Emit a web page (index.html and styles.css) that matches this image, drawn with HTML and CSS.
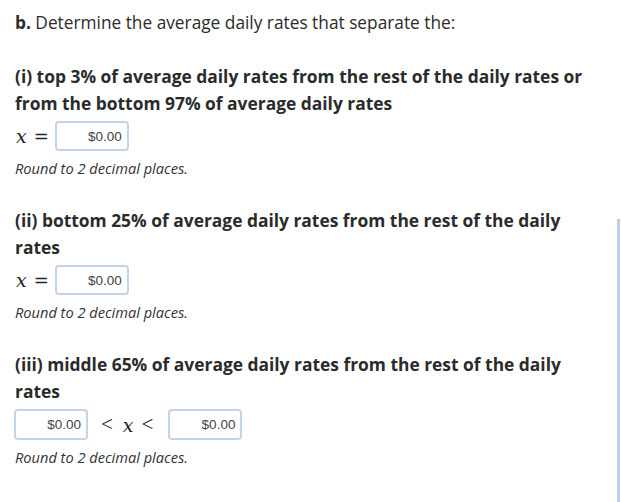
FILE: index.html
```html
<!DOCTYPE html>
<html>
<head>
<meta charset="utf-8">
<link rel="stylesheet" href="styles.css">
</head>
<body>
<div class="page">
  <main class="content">
    <p class="lead"><b>b.</b> Determine the average daily rates that separate the:</p>

    <section class="part">
      <h3 class="part-title">(i) top 3% of average daily rates from the rest of the daily rates or from the bottom 97% of average daily rates</h3>
      <div class="answer">
        <span class="math"><i class="var">x</i><span class="eq">=</span></span>
        <span class="box">$0.00</span>
      </div>
      <p class="hint">Round to 2 decimal places.</p>
    </section>

    <section class="part">
      <h3 class="part-title">(ii) bottom 25% of average daily rates from the rest of the daily rates</h3>
      <div class="answer">
        <span class="math"><i class="var">x</i><span class="eq">=</span></span>
        <span class="box">$0.00</span>
      </div>
      <p class="hint">Round to 2 decimal places.</p>
    </section>

    <section class="part">
      <h3 class="part-title">(iii) middle 65% of average daily rates from the rest of the daily rates</h3>
      <div class="answer range">
        <span class="box">$0.00</span>
        <span class="math"><span class="lt lt-a">&lt;</span><i class="var">x</i><span class="lt lt-b">&lt;</span></span>
        <span class="box">$0.00</span>
      </div>
      <p class="hint">Round to 2 decimal places.</p>
    </section>
  </main>
  <aside class="rail"></aside>
</div>
</body>
</html>
```

FILE: styles.css
```css
html, body {
  margin: 0;
  padding: 0;
  background: #ffffff;
}

body {
  font-family: "Open Sans", "Noto Sans", sans-serif;
  color: #2b2b2b;
}

.page {
  display: flex;
  min-height: 502px;
}

.content {
  flex: 1;
  padding: 10px 0 0 15px;
}

.rail {
  width: 3px;
  margin: 219px 1px 0 0;
  background: #bccfe8;
}

.lead {
  margin: 0;
  font-size: 17.3px;
  line-height: 26px;
}

.lead b {
  font-weight: 700;
}

.part {
  margin-top: 27px;
}

.part + .part {
  margin-top: 28px;
}

.part-title {
  margin: 0;
  font-size: 17.4px;
  font-weight: 700;
  line-height: 27px;
  padding-right: 20px;
}

.answer {
  display: flex;
  align-items: center;
  margin-top: 4px;
  height: 30px;
}

.range {
  height: 31px;
  margin-top: 4px;
}

.math {
  display: flex;
  align-items: center;
  font-family: "DejaVu Serif", "Liberation Serif", serif;
  font-size: 19px;
  color: #222;
}

.var {
  font-family: "DejaVu Serif", "Liberation Serif", serif;
  font-style: italic;
  font-size: 19px;
  margin-left: 1px;
}

.eq {
  font-family: "DejaVu Serif", serif;
  font-size: 18px;
  margin: 0 6px 0 7px;
}

.range .var {
  margin-left: 0;
}

.lt {
  font-family: "Liberation Serif", serif;
  font-size: 21px;
}

.lt-a {
  margin: 0 10px 0 13px;
}

.lt-b {
  margin: 0 15px 0 8px;
}

.box {
  box-sizing: border-box;
  width: 74px;
  height: 100%;
  border: 2px solid #c3d3ea;
  border-radius: 4px;
  font-family: "Liberation Sans", Arial, sans-serif;
  font-size: 13.5px;
  color: #444;
  display: flex;
  align-items: center;
  justify-content: flex-end;
  padding-right: 5px;
}

.range .box:first-child {
  margin-left: -1px;
}

.hint {
  margin: 6px 0 0;
  font-size: 14.6px;
  font-style: italic;
  line-height: 22px;
  color: #333;
}
```
